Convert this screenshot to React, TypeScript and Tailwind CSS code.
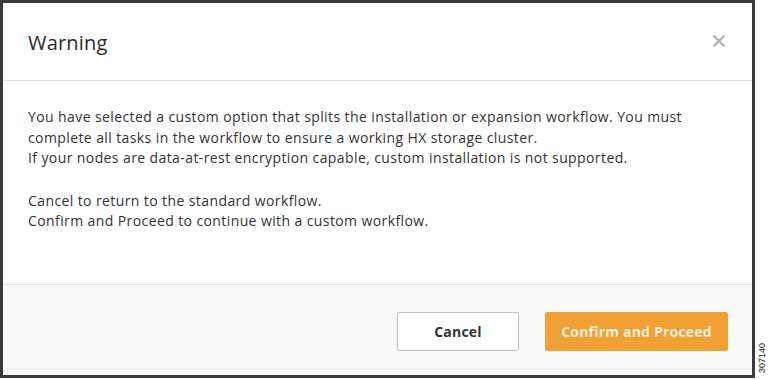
export default function App() {
    return (
        <div className="flex h-[380px] w-[768px] bg-white" style={{ fontFamily: '"Open Sans", "Liberation Sans", sans-serif' }}>
            <div className="flex h-[378px] w-[755px] flex-col border-[3px] border-[#3a3a3a] bg-white">
                <div className="flex h-[78px] items-center justify-between border-b border-[#dcdcdc] pl-[25px] pr-[26px]">
                    <h2 className="mt-[3px] text-[20px] tracking-[0.2px] text-[#2b2b2b]">Warning</h2>
                    <svg width="14" height="14" viewBox="0 0 14 14" className="mt-[-2px]">
                        <path d="M1.5 1.5 L12.5 12.5 M12.5 1.5 L1.5 12.5" stroke="#b4b4b4" strokeWidth="2.4" />
                    </svg>
                </div>
                <div className="flex-1 px-[25px] pt-[26px] text-[14px] leading-[20.5px] tracking-[0.4px] text-[#333333]">
                    <p>
                        You have selected a custom option that splits the installation or expansion workflow. You must
                        <br />
                        complete all tasks in the workflow to ensure a working HX storage cluster.
                        <br />
                        If your nodes are data-at-rest encryption capable, custom installation is not supported.
                    </p>
                    <p className="mt-[22px]">
                        Cancel to return to the standard workflow.
                        <br />
                        Confirm and Proceed to continue with a custom workflow.
                    </p>
                </div>
                <div className="flex h-[91px] items-center justify-end gap-[26px] border-t border-[#e2e2e2] bg-[#f8f8f8] pr-[24px] pt-[2px]">
                    <button className="h-[39px] w-[122px] rounded-[2px] border border-[#c4c4c4] bg-white text-[14px] font-bold tracking-[0.2px] text-[#333333]">
                        Cancel
                    </button>
                    <button className="h-[39px] w-[183px] rounded-[2px] bg-[#f0a035] text-[14px] font-bold tracking-[0.2px] text-[#fdf0dc]">
                        Confirm and Proceed
                    </button>
                </div>
            </div>
            <div className="flex flex-1 flex-col justify-end pb-[7px] pl-[2px]">
                <span className="rotate-180 text-[9px] leading-[10px] text-[#222] [writing-mode:vertical-rl]" style={{ fontFamily: '"Liberation Sans", sans-serif' }}>
                    307140
                </span>
            </div>
        </div>
    );
}
